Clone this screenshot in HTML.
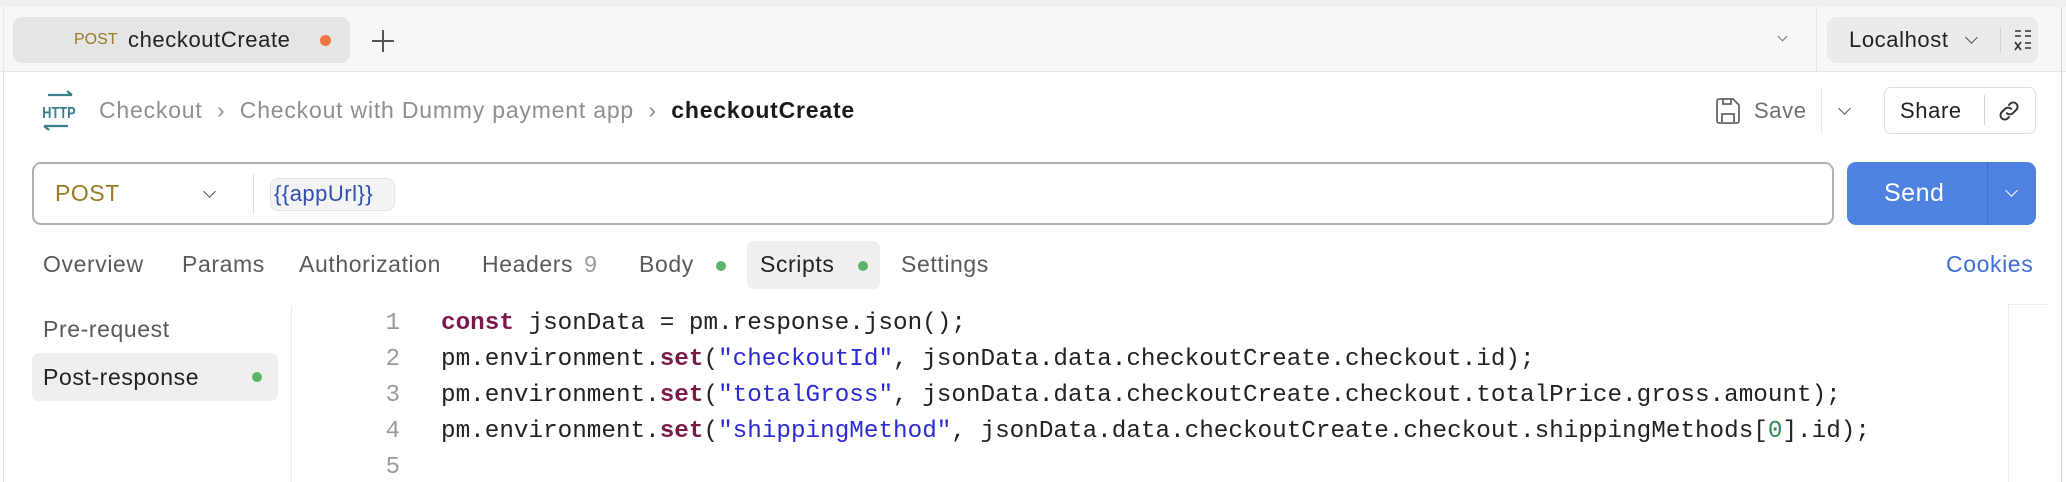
<!DOCTYPE html>
<html><head><meta charset="utf-8"><style>
*{margin:0;padding:0;box-sizing:border-box}
body{width:2066px;height:482px;overflow:hidden;background:#fff;font-family:"Liberation Sans",sans-serif;position:relative;color:#212121}
.a{position:absolute;white-space:nowrap}
.top{left:0;top:0;width:2066px;height:72px;background:#f8f8f8;border-top:7px solid #f0f0f0;border-bottom:1px solid #e6e6e6}
.vl{position:absolute;background:#e6e6e6;width:1px}
.chev{position:absolute;width:9px;height:9px;border-right:1.6px solid #555;border-bottom:1.6px solid #555;transform:rotate(45deg)}
.tab{font-size:23px;letter-spacing:0.6px;color:#5a5a5a;top:251px}
.code{font-family:"Liberation Mono",monospace;font-size:24.3px;color:#222;left:441px}
.ln{font-family:"Liberation Mono",monospace;font-size:24px;color:#9a9a9a;left:376px;width:24px;text-align:right}
.kw{color:#7a1a4a;font-weight:bold}
.st{color:#2a2ad4}
.dot{position:absolute;width:10px;height:10px;border-radius:50%;background:#5cb36a}
.ui{font-size:22px;letter-spacing:0.6px}
</style></head><body>
<div class="a top"></div>
<div class="vl" style="left:3px;top:7px;height:475px"></div>
<!-- tab -->
<div class="a" style="left:13px;top:17px;width:337px;height:46px;background:#e5e5e5;border-radius:9px"></div>
<div class="a" style="left:74px;top:31px;font-size:16px;color:#9b7a24">POST</div>
<div class="a" style="left:128px;top:27px;font-size:22px;letter-spacing:0.6px;color:#222">checkoutCreate</div>
<div class="a" style="left:320px;top:35px;width:11px;height:11px;border-radius:50%;background:#ee7647"></div>
<div class="a" style="left:372px;top:40px;width:22px;height:1.6px;background:#555"></div>
<div class="a" style="left:382px;top:30px;width:1.6px;height:22px;background:#555"></div>
<div class="chev" style="left:1779px;top:33px;width:7px;height:7px;border-color:#777"></div>
<div class="vl" style="left:1816px;top:7px;height:65px"></div>
<div class="a" style="left:1827px;top:17px;width:211px;height:46px;background:#ebebeb;border-radius:9px"></div>
<div class="a ui" style="left:1849px;top:27px;color:#222">Localhost</div>
<div class="chev" style="left:1967px;top:33px"></div>
<div class="vl" style="left:2000px;top:27px;height:26px;background:#d4d4d4"></div>
<svg class="a" style="left:2012px;top:28px" width="22" height="24" viewBox="0 0 22 24"><g stroke="#333" stroke-width="1.6"><path d="M3 3h6M13 3h6M3 8h6M13 8h6M13 15h6M13 20h6"/><path d="M3 14l6 8M9 14l-6 8"/></g></svg>
<div class="vl" style="left:2061px;top:7px;height:475px;background:#c9d6f2"></div>
<!-- breadcrumb -->
<svg class="a" style="left:38px;top:90px" width="40" height="42" viewBox="0 0 40 42">
<path d="M10 5h24M34 5l-5-4" stroke="#3a7f8c" stroke-width="2.2" fill="none"/>
<text x="21" y="28" text-anchor="middle" font-family="Liberation Sans Narrow, Liberation Sans, sans-serif" font-weight="bold" font-size="16" fill="#3a7f8c" transform="translate(21 0) scale(0.8 1) translate(-21 0)">HTTP</text>
<path d="M30 36H6M6 36l5 4" stroke="#3a7f8c" stroke-width="2.2" fill="none"/>
</svg>
<div class="a" style="left:99px;top:97px;font-size:23px;letter-spacing:0.8px;color:#8f8f8f">Checkout&nbsp; ›&nbsp; Checkout with Dummy payment app&nbsp; ›&nbsp; <b style="color:#1a1a1a">checkoutCreate</b></div>
<svg class="a" style="left:1714px;top:97px" width="28" height="28" viewBox="0 0 28 28"><path d="M3 4a2 2 0 012-2h14l6 6v16a2 2 0 01-2 2H5a2 2 0 01-2-2z" fill="none" stroke="#666" stroke-width="1.8"/><path d="M9 2v5h8V2M8 25v-8h12v8" fill="none" stroke="#666" stroke-width="1.8"/></svg>
<div class="a ui" style="left:1754px;top:98px;color:#707070">Save</div>
<div class="vl" style="left:1821px;top:87px;height:47px"></div>
<div class="chev" style="left:1840px;top:104px"></div>
<div class="a" style="left:1884px;top:87px;width:152px;height:47px;border:1.5px solid #ddd;border-radius:7px"></div>
<div class="a ui" style="left:1900px;top:98px;color:#222">Share</div>
<div class="vl" style="left:1984px;top:95px;height:30px;background:#d4d4d4"></div>
<svg class="a" style="left:1996px;top:98px" width="26" height="26" viewBox="0 0 24 24"><g fill="none" stroke="#333" stroke-width="1.8" stroke-linecap="round"><path d="M10 14a4 4 0 005.6 0l3.5-3.5a4 4 0 00-5.6-5.6L12 6.4"/><path d="M14 10a4 4 0 00-5.6 0l-3.5 3.5a4 4 0 005.6 5.6L12 17.6"/></g></svg>
<!-- url -->
<div class="a" style="left:32px;top:162px;width:1802px;height:63px;border:2px solid #b0b0b0;border-radius:9px"></div>
<div class="a" style="left:55px;top:180px;font-size:23px;letter-spacing:0.5px;color:#9b7a24">POST</div>
<div class="chev" style="left:205px;top:187px"></div>
<div class="vl" style="left:253px;top:174px;height:40px;background:#dcdcdc"></div>
<div class="a" style="left:270px;top:178px;width:125px;height:33px;background:#f3f3f3;border:1px solid #e3e3e3;border-radius:8px"></div>
<div class="a" style="left:274px;top:181px;font-size:22px;letter-spacing:0.5px;color:#2f4fb0">{{appUrl}}</div>
<div class="a" style="left:1847px;top:162px;width:189px;height:63px;background:#4f81e0;border-radius:9px"></div>
<div class="a" style="left:1884px;top:179px;font-size:25px;letter-spacing:0.5px;color:#fff">Send</div>
<div class="vl" style="left:1987px;top:162px;height:63px;background:#3f6fcc"></div>
<div class="chev" style="left:2007px;top:186px;border-color:#fff"></div>
<!-- tabs -->
<div class="a tab" style="left:43px">Overview</div>
<div class="a tab" style="left:182px">Params</div>
<div class="a tab" style="left:299px">Authorization</div>
<div class="a tab" style="left:482px">Headers <span style="color:#9a9a9a;margin-left:4px">9</span></div>
<div class="a tab" style="left:639px">Body</div>
<div class="dot" style="left:716px;top:261px"></div>
<div class="a" style="left:747px;top:241px;width:133px;height:48px;background:#efefef;border-radius:7px"></div>
<div class="a tab" style="left:760px;color:#222">Scripts</div>
<div class="dot" style="left:858px;top:261px"></div>
<div class="a tab" style="left:901px">Settings</div>
<div class="a tab" style="left:1946px;color:#3d6fd9">Cookies</div>
<!-- sidebar -->
<div class="a ui" style="left:43px;top:316px;font-size:23px;color:#5a5a5a">Pre-request</div>
<div class="a" style="left:32px;top:353px;width:246px;height:48px;background:#efefef;border-radius:7px"></div>
<div class="a ui" style="left:43px;top:364px;font-size:23px;color:#222">Post-response</div>
<div class="dot" style="left:252px;top:372px"></div>
<div class="vl" style="left:291px;top:306px;height:176px;background:#ececec"></div>
<div class="vl" style="left:2008px;top:304px;height:178px;background:#ececec"></div>
<div class="a" style="left:2008px;top:304px;width:40px;height:1px;background:#ececec"></div>
<!-- code -->
<div class="a ln" style="top:310px">1</div>
<div class="a ln" style="top:346px">2</div>
<div class="a ln" style="top:382px">3</div>
<div class="a ln" style="top:418px">4</div>
<div class="a ln" style="top:454px">5</div>
<div class="a code" style="top:310px"><span class="kw">const</span> jsonData = pm.response.json();</div>
<div class="a code" style="top:346px">pm.environment.<span class="kw">set</span>(<span class="st">"checkoutId"</span>, jsonData.data.checkoutCreate.checkout.id);</div>
<div class="a code" style="top:382px">pm.environment.<span class="kw">set</span>(<span class="st">"totalGross"</span>, jsonData.data.checkoutCreate.checkout.totalPrice.gross.amount);</div>
<div class="a code" style="top:418px">pm.environment.<span class="kw">set</span>(<span class="st">"shippingMethod"</span>, jsonData.data.checkoutCreate.checkout.shippingMethods[<span style="color:#2e8b57">0</span>].id);</div>
</body></html>
